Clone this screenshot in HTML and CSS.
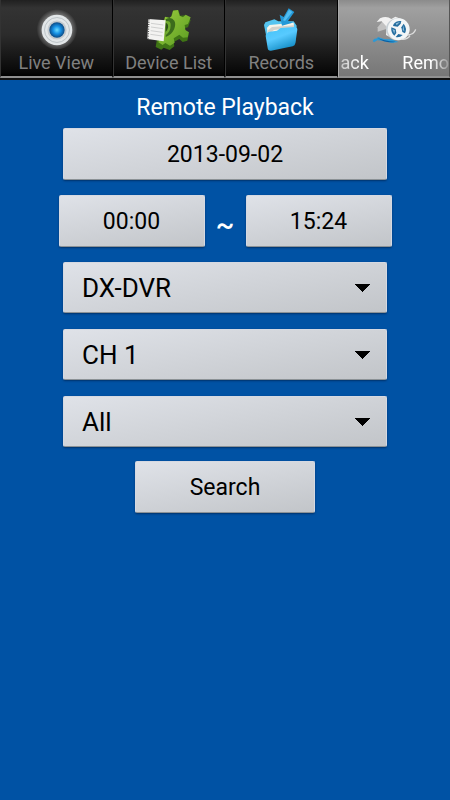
FILE: index.html
```html
<!DOCTYPE html>
<html lang="en">
<head>
<meta charset="utf-8">
<meta name="viewport" content="width=device-width, initial-scale=1">
<title>Remote Playback</title>
<link rel="stylesheet" href="styles.css">
</head>
<body>
<nav class="tabs">
  <a class="tab" href="#live">
    <svg class="icon" viewBox="0 0 48 48" aria-hidden="true">
      <defs>
        <radialGradient id="halo"><stop offset=".7" stop-color="#757575"/><stop offset="1" stop-color="#303030"/></radialGradient>
        <radialGradient id="lens"><stop offset="0" stop-color="#6cdcff"/><stop offset=".5" stop-color="#1690e4"/><stop offset="1" stop-color="#0b4a85"/></radialGradient>
      </defs>
      <circle cx="25" cy="23" r="21" fill="url(#halo)"/>
      <circle cx="25" cy="24" r="16" fill="#e2e6e8"/>
      <circle cx="25" cy="24" r="13" fill="none" stroke="#b9c0c4"/>
      <circle cx="25" cy="24" r="10" fill="#c4cace"/>
      <circle cx="25" cy="24" r="8" fill="url(#lens)"/>
    </svg>
    <span class="label">Live View</span>
  </a>
  <a class="tab" href="#devices">
    <svg class="icon" viewBox="3 6 138 138" aria-hidden="true">
      <defs><linearGradient id="leaf" x2="1" y2="1"><stop stop-color="#9ccc3e"/><stop offset="1" stop-color="#5a9d22"/></linearGradient></defs>
      <path fill="#3f7415" d="M64 35l12 3 9-22 15-1 6 17 13-1 18 14-8 22-9 2 3 17 8 2-4 19-14 4-10-9-17 9 2 13-14 11-18-7-7 6-17-8 4-24z"/>
      <path fill="url(#leaf)" d="M60 35l13 4 7-5 4-17 15-2 5 17 10 5 8-8 15 8-8 20-10 3 2 15 11 7-4 15-14 1-11-9-17 11 3 13-14 9-14-8-8 6-13-8 6-20z"/>
      <path fill="#3b6c1c" d="M62 43q17-9 26 4c7 12 0 39-26 49z"/>
      <path fill="#70ac2e" d="M62 48q16-2 15 13c0 14-6 23-15 30z"/>
      <path fill="#2c5218" d="M62 53q9 3 7 15-2 8-7 13z"/>
      <path fill="#f3f3f1" d="M10 42l52 4-6 63-49-7z"/>
      <path stroke="#cfd0cf" stroke-width="3" fill="none" d="M18 55l37 5M18 66l36 5M17 77l36 5M16 88l36 5"/>
      <path stroke="#555" stroke-width="4" stroke-dasharray="3 4" d="M12 43L9 101"/>
    </svg>
    <span class="label">Device List</span>
  </a>
  <a class="tab" href="#records">
    <svg class="icon" viewBox="0 6 138 138" aria-hidden="true">
      <defs><linearGradient id="folder" x2=".5" y2="1"><stop stop-color="#42c2f6"/><stop offset=".5" stop-color="#58caff"/><stop offset="1" stop-color="#168fc8"/></linearGradient></defs>
      <path fill="#55c4ef" d="M18 60l4-8 27-9 12 6 46 0 9 13-5 55-78 17z"/>
      <path fill="#f7f4e9" d="M27 68l8-8 72-7 3 30-80 20z"/>
      <path fill="#d4d2cb" d="M30 76l12-10 66-5v6l-60 8-18 14z"/>
      <path fill="url(#folder)" d="M28 85q1-5 7-5l22-3 11-8 41-3q9 0 9 8l-6 41q-1 7-8 9l-65 13q-9 1-10-8l-6-36q-1-5 5-8z"/>
      <path fill="#2499d8" d="M92 10l17 11-19 27 14 5-32 9-7-33 12 7z"/>
      <path fill="#52bdf0" d="M93 14l10 7-22 27-6-2z"/>
    </svg>
    <span class="label">Records</span>
  </a>
  <a class="tab selected" href="#playback" aria-current="page">
    <svg class="icon" viewBox="9 -3 138 138" aria-hidden="true">
      <path fill="#2d99d5" d="M14 99l4-6 9-2 3-4 18 6 22 1 22 8-20 3-29-7-15-1-10 6z"/>
      <path fill="#0c5fa2" d="M28 89q18 9 55 12-30 6-55-12z"/>
      <path fill="#c2c2c2" d="M29 58l16-20 24 4-12 20-28 9z"/>
      <path fill="#f1f1f1" d="M36 31q20-9 34 2l12-7 18 7-30 56-16-8 2-25-15-16-15 2z"/>
      <ellipse cx="88" cy="64" rx="34" ry="33" fill="#c7cfd4"/>
      <ellipse cx="92" cy="64" rx="33" ry="33" fill="#f3f6f7"/>
      <g fill="#246d9f">
        <path d="M77 48q8-11 23-9l-2 8-9 9-14-2z"/>
        <path d="M70 58l13 5 2 12-6 8q-11-9-9-25z"/>
        <path d="M107 47q11 14 4 29l-8-4-3-14z"/>
        <path d="M91 78l13 3q-9 9-21 6z"/>
      </g>
      <path fill="#8cbbd8" d="M83 46l13-4-10 10zM73 63l8 4-2 10zM106 52l3 18-5-4z"/>
      <path fill="none" stroke="#dedede" stroke-width="4" d="M118 81q20-1 25-17M98 94q20 2 28-11"/>
    </svg>
    <span class="label marquee"><span>ack</span><span>Remo</span></span>
  </a>
</nav>
<main>
  <form class="form">
    <h1 class="title">Remote Playback</h1>
    <button type="button" class="control date">2013-09-02</button>
    <div class="times">
      <button type="button" class="control" aria-label="Start time 00:00">00:00</button>
      <span class="to">~</span>
      <button type="button" class="control" aria-label="End time 15:24">15:24</button>
    </div>
    <div class="selects">
      <select class="control" aria-label="Device"><option>DX-DVR</option></select>
      <select class="control" aria-label="Channel"><option>CH 1</option></select>
      <select class="control" aria-label="Record type"><option>All</option></select>
    </div>
    <button type="submit" class="control search">Search</button>
  </form>
</main>
</body>
</html>
```
FILE: styles.css
```css
* { box-sizing: border-box; }

body {
  margin: 0;
  min-height: 100vh;
  background: #0052a4;
  font-family: Roboto, "Liberation Sans", sans-serif;
}

.tabs {
  display: grid;
  grid-template-columns: repeat(4, minmax(0, 1fr));
  height: 80px;
  padding-bottom: 2px;
  background: #111;
}

.tab {
  display: flex;
  flex-direction: column;
  align-items: center;
  padding-top: 7px;
  border-left: 1px solid #333;
  border-right: 1px solid #000;
  border-bottom: 2px solid #909090;
  background: linear-gradient(#202020, #333 8px, #2c2c2c 45%, #080808 72px, #000);
  color: #808080;
  text-decoration: none;
}

.tab.selected {
  border-left-color: #aaa;
  border-right-color: #555;
  background: linear-gradient(#8b8b8b, #a0a0a0 8px, #777);
  color: #fff;
}

.icon {
  width: 46px;
  height: 46px;
  flex: none;
}

.label {
  font-size: 18px;
  line-height: 20px;
  white-space: nowrap;
}

.marquee {
  display: flex;
  justify-content: space-between;
  align-self: stretch;
  padding-left: 2px;
  mask-image: linear-gradient(90deg, rgb(0 0 0 / 50%), #000 20px, #000 calc(100% - 18px), rgb(0 0 0 / 20%));
}

.form {
  display: flex;
  flex-direction: column;
  align-items: center;
  padding-top: 14px;
}

.title {
  margin: 0 0 6px;
  color: #fff;
  font-size: 23px;
  font-weight: 400;
  line-height: 28px;
}

.control {
  height: 52px;
  padding: 0;
  border: 1px solid #d5d9e2;
  border-bottom-color: #8c9296;
  border-radius: 2px;
  background: linear-gradient(170deg, #dfe2e8, #c2c5c9);
  box-shadow: 0 1px 2px #00336b;
  color: #000;
  font: 23px Roboto, "Liberation Sans", sans-serif;
}

.date { width: 72%; }

.times {
  display: grid;
  grid-template-columns: 1fr 41px 1fr;
  width: 74%;
  margin: 15px 0;
}

.to {
  color: #fff;
  font-size: 28px;
  font-weight: 500;
  line-height: 60px;
  height: 52px;
  text-align: center;
}

.selects {
  display: grid;
  gap: 16px;
  width: 72%;
  margin-bottom: 14px;
}

.selects .control {
  height: 51px;
  padding: 0 48px 0 18px;
  appearance: none;
  background:
    conic-gradient(from -45deg at 50% 100%, #000 90deg, transparent 0) right 16px center / 15px 8px no-repeat,
    linear-gradient(170deg, #dfe2e8, #c2c5c9);
  font-size: 26px;
}

.search { width: 40%; }
```
